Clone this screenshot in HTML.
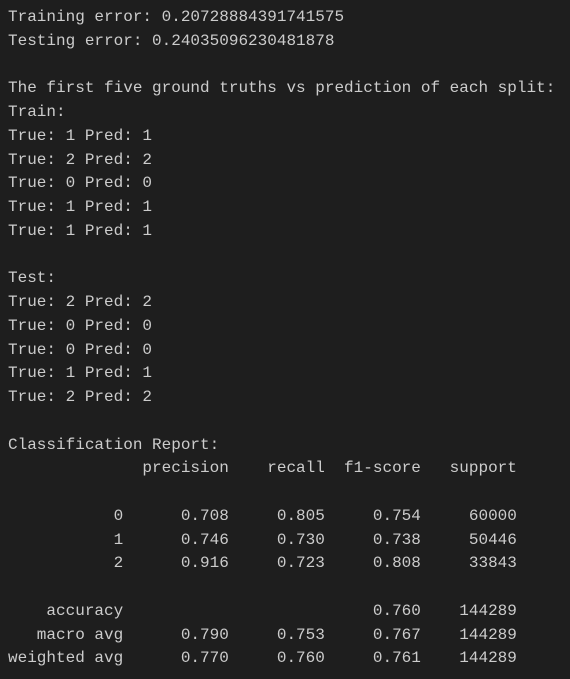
<!DOCTYPE html>
<html><head><meta charset="utf-8"><style>
html,body{margin:0;padding:0;background:#1e1e1e;width:570px;height:679px;overflow:hidden}
pre{margin:0;padding:6px 0 0 8px;font-family:"Liberation Mono","DejaVu Sans Mono",monospace;font-size:16px;line-height:23.75px;color:#cccccc;white-space:pre}
</style></head><body><pre>Training error: 0.20728884391741575
Testing error: 0.24035096230481878

The first five ground truths vs prediction of each split:
Train:
True: 1 Pred: 1
True: 2 Pred: 2
True: 0 Pred: 0
True: 1 Pred: 1
True: 1 Pred: 1

Test:
True: 2 Pred: 2
True: 0 Pred: 0
True: 0 Pred: 0
True: 1 Pred: 1
True: 2 Pred: 2

Classification Report:
              precision    recall  f1-score   support

           0      0.708     0.805     0.754     60000
           1      0.746     0.730     0.738     50446
           2      0.916     0.723     0.808     33843

    accuracy                          0.760    144289
   macro avg      0.790     0.753     0.767    144289
weighted avg      0.770     0.760     0.761    144289</pre></body></html>
